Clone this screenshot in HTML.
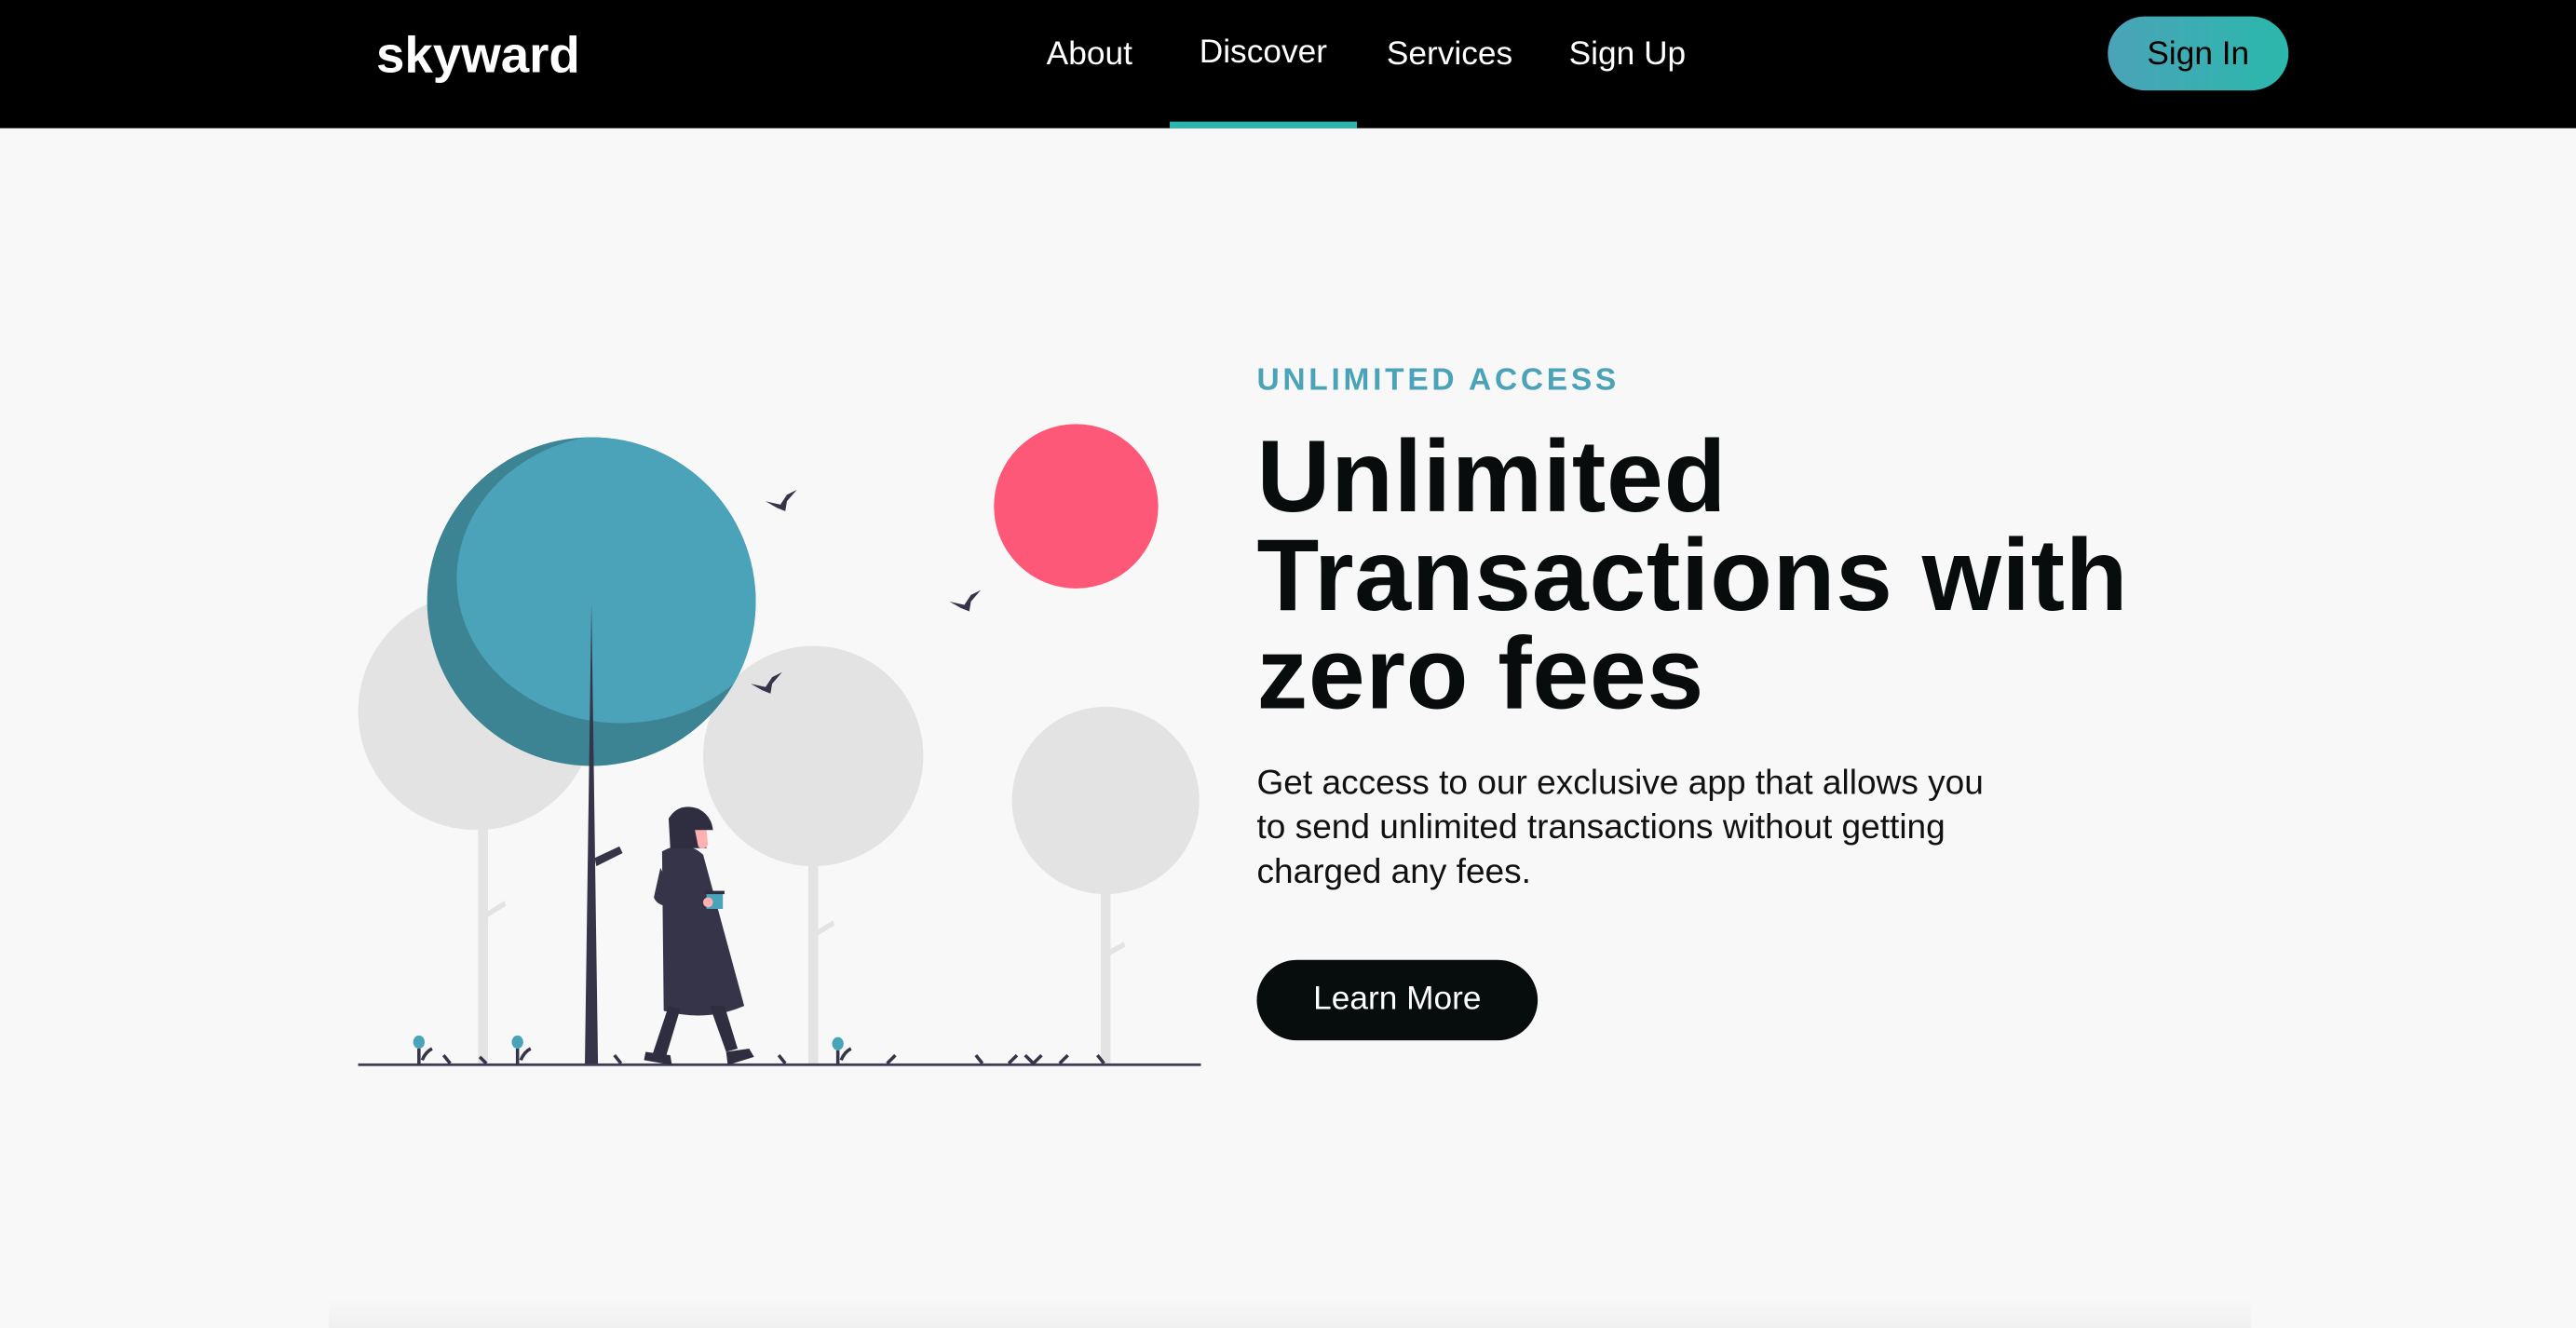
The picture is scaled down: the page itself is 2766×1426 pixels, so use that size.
<!DOCTYPE html>
<html><head><meta charset="utf-8"><style>
html,body{margin:0;padding:0;width:2766px;height:1426px;overflow:hidden;background:#f8f8f8;}
#w{position:absolute;left:0;top:0;width:1568px;height:808px;transform:scale(1.76403,1.7649);transform-origin:0 0;font-family:"Liberation Sans",sans-serif;}
.hdr{position:absolute;left:0;top:0;width:1568px;height:78px;background:#000;}
.logo{position:absolute;left:229px;top:16px;color:#fff;font-weight:bold;font-size:31px;letter-spacing:0;}
.nav{position:absolute;top:22px;color:#fff;font-size:20px;white-space:nowrap;}
.ul{position:absolute;left:712px;top:74px;width:114px;height:4px;background:#2bb5ac;}
.btn{position:absolute;left:1283px;top:10px;width:110px;height:45px;border-radius:23px;background:linear-gradient(90deg,#4aa3b8,#2bb8ac);color:#000;font-size:20px;line-height:46px;text-align:center;}
.k{position:absolute;left:765px;top:221px;color:#4aa3b8;font-weight:bold;font-size:19px;letter-spacing:2.1px;}
h1{position:absolute;left:765px;top:261px;margin:0;font-size:62px;line-height:60px;color:#080c0c;font-weight:bold;letter-spacing:0.4px;white-space:nowrap;}
.p{position:absolute;left:765px;top:463px;font-size:21px;line-height:27px;color:#111;white-space:nowrap;letter-spacing:0;}
.lm{position:absolute;left:765px;top:584px;width:171px;height:49px;border-radius:25px;background:#070c0c;color:#fff;font-size:20px;line-height:49px;text-align:center;}
.sh{position:absolute;left:200px;top:790px;width:1170px;height:18px;background:linear-gradient(#f8f8f8,#f0f0f0);}
</style></head><body><div id="w">
<div class="hdr">
<div class="logo">skyward</div>
<div class="nav" style="left:637px;top:22px">About</div>
<div class="nav" style="left:730px;top:21px">Discover</div>
<div class="nav" style="left:844px">Services</div>
<div class="nav" style="left:955px">Sign Up</div>
<div class="ul"></div>
<div class="btn">Sign In</div>
</div>
<svg style="position:absolute;left:0;top:0" width="1568" height="808">
<defs><clipPath id="c"><circle cx="360" cy="366" r="100"/></clipPath></defs>
<circle cx="290" cy="433" r="72" fill="#e3e3e3"/>
<rect x="291" y="500" width="6" height="148" fill="#e3e3e3"/>
<path d="M296 555 L307 548 L308 551 L297 558Z" fill="#e3e3e3"/>
<circle cx="495" cy="460" r="67" fill="#e3e3e3"/>
<rect x="492" y="520" width="6" height="128" fill="#e3e3e3"/>
<path d="M497 566 L507 560 L508 563 L498 569Z" fill="#e3e3e3"/>
<circle cx="673" cy="487" r="57" fill="#e3e3e3"/>
<rect x="670" y="540" width="6" height="108" fill="#e3e3e3"/>
<path d="M675 578 L684 573 L685 576 L676 581Z" fill="#e3e3e3"/>
<circle cx="360" cy="366" r="100" fill="#3c8393"/>
<ellipse cx="378" cy="352" rx="100" ry="88" fill="#4aa3b9" clip-path="url(#c)"/>
<path d="M360 367 L364 648 L356 648Z" fill="#363449"/>
<path d="M362 522 L377 515 L379 519 L363 527Z" fill="#363449"/>
<circle cx="655" cy="308" r="50" fill="#fd5878"/>
<g fill="#363449">
<path d="M466 305 L475 307 L479 301 L485 298 L479 305 L478 311 L473 309Z"/>
<path d="M578 366 L587 368 L591 362 L597 359 L591 366 L590 372 L585 370Z"/>
<path d="M457 416 L466 418 L470 412 L476 409 L470 416 L469 422 L464 420Z"/>
</g>
<rect x="218" y="647" width="513" height="1.6" fill="#3f3d56"/>
<g fill="#363449">
<path d="M403 518 Q417 510 428 520 L453 612 Q430 622 404 615 Z"/>
<path d="M407 612 L397 642 L405 644 L414 614Z" fill="#2f2e41"/>
<path d="M432 612 L442 640 L449 638 L441 612Z" fill="#2f2e41"/>
<path d="M393 640 L408 642 L409 648 L392 645Z" fill="#2f2e41"/>
<path d="M442 640 L456 638 L459 643 L443 648Z" fill="#2f2e41"/>
<path d="M407 498 Q413 488 425 492 Q433 496 434 505 L430 505 L430 516 L408 516Z" fill="#2f2e41"/>
<path d="M402 528 L398 546 Q400 552 412 552 L432 550 L431 545 L410 544Z"/>
</g>
<path d="M423 505 L430 505 L431 514 Q428 518 425 515Z" fill="#ffb0b0"/>
<rect x="430" y="543" width="10" height="10" fill="#4aa3b9"/>
<rect x="429" y="542" width="12" height="2" fill="#2f2e41"/>
<circle cx="431" cy="549" r="3" fill="#ffb0b0"/>
<g fill="#4aa3b9"><ellipse cx="255" cy="634" rx="3.5" ry="4"/><ellipse cx="315" cy="634" rx="3.5" ry="4"/><ellipse cx="510" cy="635" rx="3.5" ry="4"/></g>
<g stroke="#363449" stroke-width="2" fill="none">
<path d="M255 638V648M257 645 Q259 640 263 638"/><path d="M315 638V648M317 645 Q319 640 323 638"/><path d="M510 639V648M512 645 Q514 640 518 638"/>
<path d="M270 642 L274 647"/><path d="M292 643 L296 647"/><path d="M374 642 L378 647"/><path d="M474 642 L478 647"/><path d="M540 647 L545 642"/><path d="M594 642 L598 647"/><path d="M614 647 L619 642"/><path d="M624 642 L629 647 L634 642"/><path d="M645 647 L650 642"/><path d="M668 642 L672 647"/>
</g>
</svg>
<div class="k">UNLIMITED ACCESS</div>
<h1>Unlimited<br>Transactions with<br>zero fees</h1>
<div class="p">Get access to our exclusive app that allows you<br>to send unlimited transactions without getting<br>charged any fees.</div>
<div class="lm">Learn More</div>
<div class="sh"></div>
</div></body></html>
